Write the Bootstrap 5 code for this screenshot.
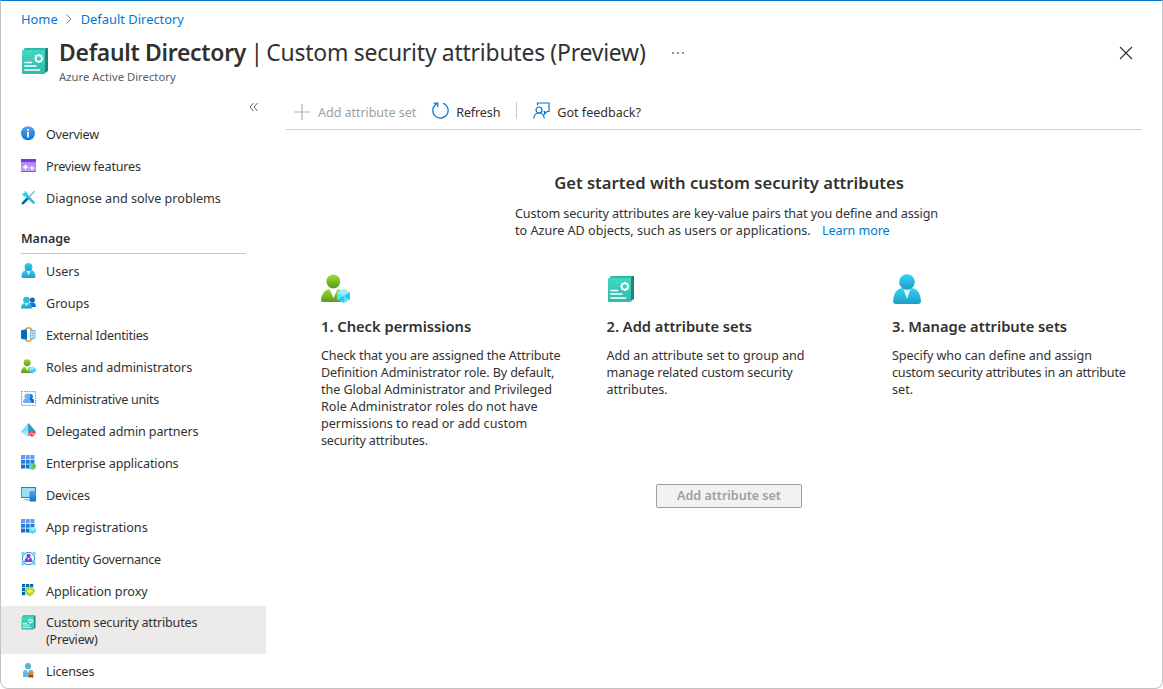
<!DOCTYPE html>
<html lang="en">
<head>
<meta charset="utf-8">
<meta name="viewport" content="width=device-width, initial-scale=1">
<title>Custom security attributes (Preview)</title>
<link href="https://cdn.jsdelivr.net/npm/bootstrap@5.3.0/dist/css/bootstrap.min.css" rel="stylesheet">
<style>
html,body{height:689px;overflow:hidden}
body{font-family:"Noto Sans","Open Sans",sans-serif;font-size:12.6px;line-height:17px;color:#323130;background:#fff}
a{color:#0078d4;text-decoration:none}
.blade{height:689px;border:1px solid #c3c3c3;border-top-color:#0078d4;border-radius:0 0 8px 8px;overflow:hidden}
.crumbs{height:36px;padding:0 20px;gap:7.500px;font-size:12.9px}
.blade-head{height:52px;padding-left:20px;padding-right:29px}
.head-icon{margin-top:10px;margin-right:10px}
.blade-title{font-size:22.9px;line-height:31px;font-weight:400;white-space:nowrap;letter-spacing:-.26px;word-spacing:-.3px}
.blade-title b{font-weight:600}
.title-bar{margin:0 -2px 0 -1px}
.title-page{letter-spacing:-.2px}
.blade-sub{font-size:11.3px;line-height:16px;color:#605e5c;margin-top:1px}
.more-dots{margin:14px 0 0 25px}
.close-x{margin-top:9px}
.side-menu{width:265px;flex:none}
.collapse-row{height:29px;padding-right:7px}
.collapse-row svg{margin-top:6px}
.menu-link{height:32px;padding:0 20px;gap:10px;color:#323130}
.menu-link svg{width:15px;height:15px;flex:none;margin-top:-2px}
.menu-link.current{height:48px;background:#edebe9;margin-top:-1px;margin-bottom:1px;padding-top:2px}
.menu-link.current svg{margin-top:-17px}
.menu-title{margin:0 20px 1px;height:40px;padding-top:16px;border-bottom:1px solid #c8c6c4;font-weight:600;font-size:12.5px}
.ls-1{letter-spacing:-.07px}
.ls-2{letter-spacing:-.14px}
.ls-3{letter-spacing:-.2px}
.ls-4{letter-spacing:-.27px}
.work{margin-left:20px;width:856px}
.cmdbar{height:41px;border-bottom:1px solid #d2d0ce;padding-top:6px}
.cmd-off{color:#a19f9d;letter-spacing:-.08px}
.cmd-refresh{margin-left:2px}
.cmd-sep{width:1px;height:17px;background:#c8c6c4}
.cmd-feedback{margin-left:7px;letter-spacing:-.03px}
.page-body{padding-left:30px}
.intro{width:428px;margin:0 auto}
.intro h2{font-size:16.6px;line-height:24px;font-weight:600;margin:41px 0 10px;white-space:nowrap}
.lead-line{letter-spacing:-.1px}
.steps{display:grid;grid-template-columns:285.5px 285.5px 285px;margin-top:35px;height:210px;padding-left:5px;margin-right:-35px}
.steps h3{font-size:14.7px;line-height:20px;font-weight:600;margin:12px 0 11px;white-space:nowrap}
.steps p{margin:0;white-space:nowrap}
.add-btn{width:146px;height:24px;padding:0;font-size:12.6px;line-height:20px;font-weight:600;letter-spacing:-.04px;border-radius:2px}
.add-btn:disabled{opacity:1;border-color:#a19f9d;background:#f3f2f1;color:#a19f9d}
</style>
<script src="https://cdn.jsdelivr.net/npm/bootstrap@5.3.0/dist/js/bootstrap.bundle.min.js"></script>
</head>
<body>
<svg width="0" height="0" class="position-absolute" aria-hidden="true">
<defs>
<linearGradient id="gc" x2="0" y2="1"><stop stop-color="#32d4f5"/><stop offset="1" stop-color="#1f9cc8"/></linearGradient>
<linearGradient id="gg" x2="0" y2="1"><stop stop-color="#9be02a"/><stop offset="1" stop-color="#5e9624"/></linearGradient>
<linearGradient id="gb" x2="0" y2="1"><stop stop-color="#5ea0ef"/><stop offset="1" stop-color="#0078d4"/></linearGradient>
<linearGradient id="gt" x2="0" y2="1"><stop stop-color="#42d8c2"/><stop offset="1" stop-color="#30bba9"/></linearGradient>
<linearGradient id="gp" x2="0" y2="1"><stop stop-color="#a67af4"/><stop offset="1" stop-color="#c7a4ff"/></linearGradient>
<symbol id="person" viewBox="0 0 28 30"><path d="M3 30Q0 30 0 27Q1 15 9 14H19Q27 15 28 27Q28 30 25 30Z" fill="url(#gc)"/><path d="M10 14H18L14 25Z" fill="#e3f8ff"/><circle cx="14" cy="8" r="7.8" fill="url(#gc)"/></symbol>
<symbol id="admin" viewBox="0 0 30 30"><path d="M1 28Q0 28 0 26Q1 16 9 15H16Q24 16 25 28Z" fill="url(#gg)"/><path d="M8 14H17L12.500 24Z" fill="#fff"/><circle cx="12.300" cy="7.500" r="6.900" fill="url(#gg)"/><path d="M23 15L29 18.500V25.500L23 29L16 25.500V18.500Z" fill="#50e6ff"/><path d="M23 15L29 18.500L23 22L16 18.500Z" fill="#9cebff"/><path d="M29 18.500V25.500L23 22Z" fill="#32c4e0"/><path d="M16 25.500L23 22V29Z" fill="#32c8ea"/></symbol>
<symbol id="attrs" viewBox="0 0 28 28"><path d="M4 1H27V24L24 26V4H2Z" fill="#258277"/><path d="M4 1H25L24 4H3Z" fill="#30b9a8"/><rect x="1" y="3" width="23" height="24" rx="1" fill="url(#gt)"/><path d="M4 15.500H10.500M4 19H15M4 23H18.500" stroke="#fff" stroke-width="1.700" stroke-linecap="round"/><circle cx="17.800" cy="11.500" r="3.100" fill="none" stroke="#fff" stroke-width="1.600"/><g stroke="#fff" stroke-width="1.600"><path d="M17.800 7V8.500M17.800 14.500V16M13.300 11.500H14.800M20.800 11.500H22.300M14.600 8.300L15.700 9.400M19.900 13.600L21 14.700M14.600 14.700L15.700 13.600M19.900 9.400L21 8.300"/></g></symbol>
<symbol id="info" viewBox="0 0 15 15"><circle cx="7" cy="7.300" r="7" fill="url(#gb)"/><circle cx="7" cy="4" r="1.100" fill="#fff"/><path d="M6.100 6H7.900V11.500H6.100Z" fill="#fff"/></symbol>
<symbol id="preview" viewBox="0 0 15 15"><rect y="1" width="15" height="13" rx=".5" fill="url(#gp)"/><path d="M0 1H15V4H0Z" fill="#773adc"/><path d="M0 13H15V14H0Z" fill="#8b54db"/><path d="M4.500 5.500L5.400 8.100L8 9L5.400 9.900L4.500 12.500L3.600 9.900L1 9L3.600 8.100ZM11 7L11.700 9.300L14 10L11.700 10.700L11 13L10.300 10.700L8 10L10.300 9.300Z" fill="#fff"/></symbol>
<symbol id="tools" viewBox="0 0 15 15"><path d="M13.500 1.300L7 8" stroke="#8bb7cc" stroke-width="1.500"/><path d="M7 8L2 13.200" stroke="#0063b1" stroke-width="2.600" stroke-linecap="round"/><path d="M4 4L12.500 12.500" stroke="#32bedd" stroke-width="2.600" stroke-linecap="round"/><path d="M3 1.200L5 3.200L3.700 4.500L1.200 3Q1 5.500 2.500 6.300Q5 7 6.500 5Q7 1.500 3 1.200Z" fill="#32d4f5"/></symbol>
<symbol id="people" viewBox="0 0 15 15"><path d="M7 12Q7.500 8 10 7.500H12.500Q14.800 8 15 12Z" fill="#0078d4"/><circle cx="11.400" cy="5" r="2.500" fill="#0b65c4"/><path d="M0 13.500Q0 8.500 3.500 8H7Q10.700 8.500 11 13.500Z" fill="url(#gc)"/><path d="M4 8H7L5.500 11Z" fill="#fff"/><circle cx="5.500" cy="5" r="3.300" fill="#2bb9dd"/></symbol>
<symbol id="external" viewBox="0 0 15 15"><path d="M0 3.200L6 2V13L0 11.800Z" fill="#0078d4"/><path d="M1.200 5H2.500M3.500 5H4.800M1.200 7.500H2.500M3.500 7.500H4.800M1.200 10H2.500M3.500 10H4.800" stroke="#005ba1" stroke-width="1.300"/><path d="M9 2L14.500 3.200V11.800L9 13Z" fill="#83b9df"/><path d="M10 5H11.500M12.200 5H13.500M10 7.500H11.500M12.200 7.500H13.500M10 10H11.500M12.200 10H13.500" stroke="#e7f6ff" stroke-width="1.300"/><path d="M4.200 2.500Q7.500-1 10.800 2.500M4.200 12.500Q7.500 16 10.800 12.500" fill="none" stroke="#f79421" stroke-width="1.400"/></symbol>
<symbol id="units" viewBox="0 0 15 15"><rect x=".5" y=".5" width="14" height="14" fill="#f3faff" stroke="#5da4d9" stroke-dasharray="1.500 1"/><path d="M7 11.500Q7.500 7 10 7L12.800 8.500L13 12Z" fill="#1263bd"/><circle cx="9.300" cy="5.500" r="2.600" fill="#1976d2"/><path d="M2 12Q2 7.500 5 7.500H7Q10 8 10.500 12Z" fill="#6eacf5"/><circle cx="6.500" cy="5.300" r="2.900" fill="#72b1f8"/></symbol>
<symbol id="partners" viewBox="0 0 15 15"><path d="M7.500 0L0 9L7.500 13.500L14.500 8.500Z" fill="#32bedd"/><path d="M7.500 0L0 9L7 7.500Z" fill="#75e4f4"/><path d="M7.500 0L7 7.500L14.500 8.500Z" fill="#3596c4"/><path d="M0 9L7 7.500L7.500 13.500Z" fill="#afe6f3"/><path d="M11 14L7.500 10.700Q7 8 9.500 7.800L11 9L12.500 7.800Q15 8 14.500 10.700Z" fill="#ed3448"/><path d="M8 10.500H10L10.700 9.500L11.500 12L12 10.500H14" fill="none" stroke="#ffd4d8" stroke-width=".7"/></symbol>
<symbol id="tiles" viewBox="0 0 15 15"><path d="M0 0H4V4H0ZM4.700 0H8.700V4H4.700ZM9.400 0H13.400V4H9.400Z" fill="#5ea0ef"/><path d="M0 4.700H4V8.700H0ZM4.700 4.700H8.700V8.700H4.700ZM9.400 4.700H13.400V8.700H9.400Z" fill="#227ed8"/><path d="M0 9.400H4V13.400H0ZM4.700 9.400H8.700V13.400H4.700Z" fill="#1471ca"/></symbol>
<symbol id="devices" viewBox="0 0 15 15"><path d="M0 0H15V11H0Z" fill="#2979ce"/><path d="M.7 1H14V10H.7Z" fill="#9bdcf8"/><path d="M3.500 12H8V13.500H3.500Z" fill="#86c8e9"/><rect x="8.500" y="4" width="6.500" height="10.500" rx=".7" fill="url(#gb)"/></symbol>
<symbol id="governance" viewBox="0 0 15 15"><circle cx="7.500" cy="7.500" r="6.200" fill="#eef8ff" stroke="#2586d5" stroke-width="1"/><g fill="#d8f7ff" stroke="#37c2e9"><circle cx="2" cy="2.500" r="1.300"/><circle cx="13" cy="2.500" r="1.300"/><circle cx="2" cy="12.500" r="1.300"/><circle cx="13" cy="12.500" r="1.300"/></g><path d="M3.500 11Q3.500 7 6 6.800H9Q11.500 7 11.500 11Z" fill="#7f49bf"/><circle cx="7.500" cy="5" r="2.200" fill="#7f49bf"/><path d="M6.500 7H8.500L7.500 9Z" fill="#fff"/></symbol>
<symbol id="proxy" viewBox="0 0 15 15"><path d="M1 1H4.200V4.200H1ZM5 1H8.200V4.200H5ZM9 1H12.200V4.200H9ZM1 5H4.200V8.200H1ZM5 5H8.200V8.200H5ZM1 9H4.200V12.200H1Z" fill="#0067b8"/><circle cx="8.800" cy="8" r="4.500" fill="#b4d430"/><path d="M8.800 4.500V11.500M5.300 8H12.300" stroke="#edffb0"/><path d="M8.800 2.500L10.100 4.500H7.500ZM8.800 13.500L10.100 11.500H7.500ZM3.300 8L5.300 6.700V9.300ZM14.300 8L12.300 6.700V9.300Z" fill="#87b80c"/></symbol>
<symbol id="license" viewBox="0 0 15 15"><path d="M2 14V10Q2 7 5 7H10Q12.500 7 12.500 9V14Z" fill="#67b6da"/><path d="M5.500 7H8.500L7 10Z" fill="#e5f6ff"/><circle cx="7" cy="3.200" r="3.100" fill="#59b4d9"/><path d="M8 11L7.700 15L9.800 14L12 15L11.700 11Z" fill="#9e3f1c"/><circle cx="9.900" cy="10" r="2.200" fill="#f58220"/></symbol>
</defs>
</svg>

<main class="blade">
  <nav class="crumbs d-flex align-items-center" aria-label="Breadcrumb">
    <a href="#">Home</a>
    <svg width="8" height="12" viewBox="0 0 8 12" fill="none" stroke="#797775"><path d="M1.500 1.500L6 6L1.500 10.500"/></svg>
    <a href="#">Default Directory</a>
  </nav>
  <header class="blade-head d-flex align-items-start">
    <svg width="28" height="28" class="head-icon flex-shrink-0"><use href="#attrs"/></svg>
    <div>
      <h1 class="blade-title mb-0"><b>Default Directory</b> <span class="title-bar">|</span> <span class="title-page">Custom security attributes (Preview)</span></h1>
      <div class="blade-sub">Azure Active Directory</div>
    </div>
    <svg class="more-dots" width="14" height="4" fill="#605e5c"><circle cx="2" cy="2" r=".9"/><circle cx="7" cy="2" r=".9"/><circle cx="12" cy="2" r=".9"/></svg>
    <svg class="ms-auto close-x" width="14" height="14" fill="none" stroke="#323130" stroke-width="1.100"><path d="M1 1L13 13M13 1L1 13"/></svg>
  </header>
  <div class="d-flex align-items-start">
    <aside class="side-menu">
      <div class="collapse-row d-flex justify-content-end align-items-center"><svg width="10" height="10" fill="none" stroke="#605e5c"><path d="M4.500 1L1 5L4.500 9M8.500 1L5 5L8.500 9"/></svg></div>
      <nav class="d-flex flex-column">
        <a class="menu-link d-flex align-items-center" href="#"><svg><use href="#info"/></svg><span class="ls-4">Overview</span></a>
        <a class="menu-link d-flex align-items-center" href="#"><svg><use href="#preview"/></svg><span class="ls-3">Preview features</span></a>
        <a class="menu-link d-flex align-items-center" href="#"><svg><use href="#tools"/></svg><span>Diagnose and solve problems</span></a>
        <div class="menu-title">Manage</div>
        <a class="menu-link d-flex align-items-center" href="#"><svg><use href="#person"/></svg><span>Users</span></a>
        <a class="menu-link d-flex align-items-center" href="#"><svg><use href="#people"/></svg><span>Groups</span></a>
        <a class="menu-link d-flex align-items-center" href="#"><svg><use href="#external"/></svg><span class="ls-4">External Identities</span></a>
        <a class="menu-link d-flex align-items-center" href="#"><svg><use href="#admin"/></svg><span class="ls-1">Roles and administrators</span></a>
        <a class="menu-link d-flex align-items-center" href="#"><svg><use href="#units"/></svg><span class="ls-4">Administrative units</span></a>
        <a class="menu-link d-flex align-items-center" href="#"><svg><use href="#partners"/></svg><span class="ls-2">Delegated admin partners</span></a>
        <a class="menu-link d-flex align-items-center" href="#"><svg viewBox="0 0 15 15"><use href="#tiles"/><circle cx="11.300" cy="11.300" r="3.500" fill="#76bc2d"/><path d="M8.500 9.500Q10 8 12 9L11 11.500L12.500 14Q8 14.500 8 11.500Z" fill="#50d8e4"/></svg><span class="ls-2">Enterprise applications</span></a>
        <a class="menu-link d-flex align-items-center" href="#"><svg><use href="#devices"/></svg><span class="ls-2">Devices</span></a>
        <a class="menu-link d-flex align-items-center" href="#"><svg viewBox="0 0 15 15"><use href="#tiles"/><path d="M11.500 8L15 9.800V13L11.500 15L8 13V9.800Z" fill="#50dcf5"/><path d="M11.500 8L15 9.800L11.500 11.500L8 9.800Z" fill="#a5efff"/></svg><span>App registrations</span></a>
        <a class="menu-link d-flex align-items-center" href="#"><svg><use href="#governance"/></svg><span class="ls-4">Identity Governance</span></a>
        <a class="menu-link d-flex align-items-center" href="#"><svg><use href="#proxy"/></svg><span class="ls-1">Application proxy</span></a>
        <a class="menu-link current d-flex align-items-center" href="#" aria-current="page"><svg><use href="#attrs"/></svg><span class="ls-3">Custom security attributes<br>(Preview)</span></a>
        <a class="menu-link d-flex align-items-center" href="#"><svg><use href="#license"/></svg><span class="ls-3">Licenses</span></a>
      </nav>
    </aside>
    <section class="work">
      <div class="cmdbar d-flex align-items-center">
        <svg width="16" height="16" class="ms-2" stroke="#b3b0ad" stroke-width="1.200"><path d="M8 0V16M0 8H16"/></svg>
        <span class="cmd-off ms-2">Add attribute set</span>
        <svg width="18" height="18" class="ms-3 me-1 mb-1" viewBox="1.500 -.5 18 18" fill="none" stroke="#0078d4" stroke-width="1.200"><path d="M12.500 1.700A7.700 7.700 0 1 1 6.300 2.200M3.200 1.600H7.300V5.700"/></svg>
        <span class="cmd-refresh ls-2">Refresh</span>
        <span class="cmd-sep ms-3 mb-1"></span>
        <svg width="17" height="18" class="ms-3 mb-1" viewBox="0 -.5 17 18" fill="none" stroke="#0078d4" stroke-width="1.200"><circle cx="6" cy="8.500" r="3"/><path d="M.8 17Q1 11.500 6 11.500T11.200 17M4.500 4V1.500H16V10H14L11.500 12.500V10H10.500"/></svg>
        <span class="cmd-feedback">Got feedback?</span>
      </div>
      <div class="page-body">
        <div class="intro">
          <h2 class="text-center">Get started with custom security attributes</h2>
          <p class="mb-0 text-nowrap"><span class="lead-line">Custom security attributes are key-value pairs that you define and assign</span><br>to Azure AD objects, such as users or applications. <a href="#" class="ms-2 ls-1">Learn more</a></p>
        </div>
        <div class="steps">
          <div><svg width="30" height="30"><use href="#admin"/></svg><h3>1. Check permissions</h3><p><span class="ls-2">Check that you are assigned the Attribute</span><br><span class="ls-2">Definition Administrator role. By default,</span><br><span class="ls-1">the Global Administrator and Privileged</span><br>Role Administrator roles do not have<br>permissions to read or add custom<br><span class="ls-3">security attributes.</span></p></div>
          <div><svg width="30" height="30" viewBox="0 -1 30 30"><use href="#attrs" width="28" height="28"/></svg><h3>2. Add attribute sets</h3><p>Add an attribute set to group and<br><span class="ls-2">manage related custom security</span><br>attributes.</p></div>
          <div><svg width="30" height="30"><use href="#person"/></svg><h3>3. Manage attribute sets</h3><p><span class="ls-1">Specify who can define and assign</span><br><span class="ls-3">custom security attributes in an attribute</span><br>set.</p></div>
        </div>
        <div class="text-center"><button class="btn add-btn" disabled>Add attribute set</button></div>
      </div>
    </section>
  </div>
</main>
</body>
</html>
